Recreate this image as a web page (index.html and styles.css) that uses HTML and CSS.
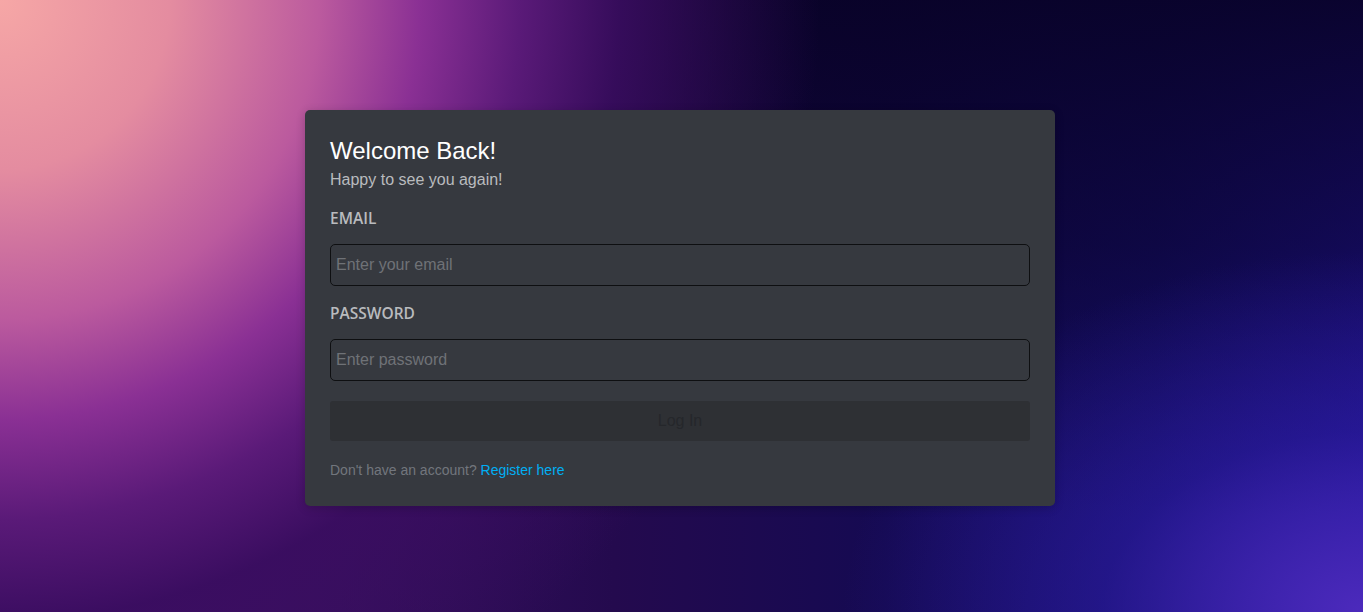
FILE: index.html
```html
<!DOCTYPE html>
<html lang="en">
<head>
<meta charset="utf-8">
<title>Login</title>
<link rel="stylesheet" href="styles.css">
</head>
<body>
<main class="page">
  <form class="card">
    <h1 class="title">Welcome Back!</h1>
    <p class="subtitle">Happy to see you again!</p>
    <label class="label" for="email">EMAIL</label>
    <input class="input" id="email" type="email" placeholder="Enter your email">
    <label class="label" for="password">PASSWORD</label>
    <input class="input" id="password" type="password" placeholder="Enter password">
    <button class="btn" type="button">Log In</button>
    <p class="footer">Don't have an account? <a class="link" href="#">Register here</a></p>
  </form>
</main>
</body>
</html>
```
FILE: styles.css
```css
html, body {
  margin: 0;
  height: 100%;
}
body {
  font-family: "Liberation Sans", Arial, sans-serif;
  background:
    radial-gradient(circle at 0 0, #f6a7a6 0px, #e48ca0 170px, #bb5a9e 320px, #8a3094 420px, #5a1a78 520px, rgba(58,13,96,0.9) 620px, rgba(30,8,70,0) 820px),
    radial-gradient(ellipse 520px 360px at 100% 100%, rgba(76,42,188,1) 0%, rgba(45,28,160,0.55) 50%, rgba(30,20,130,0) 100%),
    linear-gradient(to bottom, rgba(8,2,38,0.92) 0%, rgba(8,2,38,0.6) 40%, rgba(8,2,38,0) 85%),
    linear-gradient(to right, #44106c 0%, #36105e 25%, #240a4e 45%, #150a52 65%, #171072 85%, #22159c 100%);
  overflow: hidden;
}
.page {
  box-sizing: border-box;
  height: 100%;
  padding: 4px 3px 0 0;
  display: flex;
  align-items: center;
  justify-content: center;
}
.card {
  width: 750px;
  box-sizing: border-box;
  padding: 27px 25px 28px;
  background: #36393f;
  border-radius: 5px;
  box-shadow: 0 2px 10px rgba(0,0,0,0.2);
  display: flex;
  flex-direction: column;
}
.title {
  margin: 0;
  font-size: 24px;
  line-height: 28px;
  font-weight: 400;
  color: #ffffff;
}
.subtitle {
  margin: 5px 0 0;
  font-size: 16px;
  line-height: 20px;
  color: #b9bbbe;
}
.label {
  margin-top: 18px;
  font-family: "Open Sans", sans-serif;
  font-weight: 600;
  font-size: 15.5px;
  line-height: 20px;
  color: #b9bbbe;
}
.label + .input {
  margin-top: 16px;
}
.input + .label {
  margin-top: 17px;
}
.input {
  box-sizing: border-box;
  height: 42px;
  width: 100%;
  padding: 0 5px;
  background: #36393f;
  border: 1px solid #0e0f11;
  border-radius: 5px;
  font-family: "Liberation Sans", Arial, sans-serif;
  font-size: 16px;
  color: #dcddde;
  outline: none;
}
.input::placeholder {
  color: #6f7277;
}
.btn {
  margin-top: 20px;
  height: 40px;
  border: none;
  border-radius: 3px;
  background: #2e3034;
  color: #25272b;
  font-family: "Liberation Sans", Arial, sans-serif;
  font-size: 16px;
}
.footer {
  margin: 21px 0 0;
  font-size: 14px;
  line-height: 16px;
  color: #72767d;
}
.link {
  color: #00aff4;
  text-decoration: none;
}
```
